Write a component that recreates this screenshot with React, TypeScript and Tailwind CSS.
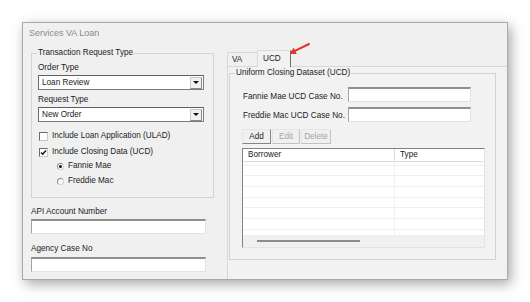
import React from 'react';

const sunken = 'bg-white border-t-[2px] border-t-[#8f8f8f] border-l border-l-[#a3a3a3] border-r border-r-[#e2e2e2] border-b border-b-[#e2e2e2]';

function TextBox({ className = '' }: { className?: string }) {
  return <div className={`h-[15px] ${sunken} ${className}`} />;
}

function Combo({ value }: { value: string }) {
  return (
    <div className="mt-[2px] flex h-[15px] w-[166px] items-center border border-[#7c7c7c] border-t-[#5f5f5f] border-l-[#6a6a6a] bg-white pl-[3px] pr-px">
      <span className="flex-1">{value}</span>
      <div className="flex h-[12px] w-[12px] items-center justify-center border border-[#c9c9c9] border-r-[#8a8a8a] border-b-[#8a8a8a] bg-[#f0f0f0]">
        <svg width="6" height="5" viewBox="0 0 6 5">
          <path d="M0 1h6L3 4z" fill="#111" />
        </svg>
      </div>
    </div>
  );
}

function Check({ label, checked }: { label: string; checked?: boolean }) {
  return (
    <div className="flex h-[10px] items-center gap-[4px] pl-px">
      <div className="flex h-[9px] w-[9px] items-center justify-center border border-[#6c6c6c] border-r-[#c8c8c8] border-b-[#c8c8c8] bg-white">
        {checked && (
          <svg width="7" height="7" viewBox="0 0 7 7">
            <path d="M1 3.5l1.7 1.8L6 1.5" stroke="#111" strokeWidth="1.4" fill="none" />
          </svg>
        )}
      </div>
      <span>{label}</span>
    </div>
  );
}

function Radio({ label, checked }: { label: string; checked?: boolean }) {
  return (
    <div className="flex h-[10px] items-center gap-[4px] pl-[19px]">
      <div className="flex h-[7px] w-[7px] items-center justify-center rounded-full border border-[#8a8a8a] border-r-[#d0d0d0] border-b-[#d0d0d0] bg-white">
        {checked && <div className="h-[3px] w-[3px] rounded-full bg-[#111]" />}
      </div>
      <span>{label}</span>
    </div>
  );
}

function Btn({ label, w, disabled }: { label: string; w: string; disabled?: boolean }) {
  return (
    <div
      className={`flex h-[15px] ${w} items-center justify-center border border-[#e6e6e6] bg-[#f0f0f0] ${
        disabled ? 'border-r-[#c2c2c2] border-b-[#c2c2c2] text-[#a6a6a6]' : 'border-r-[#858585] border-b-[#858585]'
      }`}
    >
      {label}
    </div>
  );
}

const rowHeights = ['h-[10px]', 'h-[11px]', 'h-[11px]', 'h-[10px]', 'h-[11px]', 'h-[11px]', 'h-[6px]'];

export default function App() {
  return (
    <div className="min-h-screen bg-white pl-[22px] pt-[22px]">
      <div className="relative flex h-[258px] w-[486px] flex-col border border-[#a9a9a9] bg-[#f0f0f0] font-['Liberation_Sans',Arial,sans-serif] text-[8.2px] leading-[10px] text-[#1b1b1b] shadow-[3px_4px_12px_rgba(0,0,0,0.35)]">
        {/* title */}
        <div className="flex h-[22px] items-center pb-[2px] pl-[6px] text-[9px] text-[#8b8b8b]">Services VA Loan</div>

        <div className="flex min-h-0 flex-1">
          {/* left column */}
          <div className="w-[191px] pl-[8px]">
            <fieldset className="mt-[3px] w-[183px] border border-[#d3d3d3] px-[6px] pb-[11px]">
              <legend className="-ml-px px-px">Transaction Request Type</legend>
              <div className="mt-[5px]">Order Type</div>
              <Combo value="Loan Review" />
              <div className="mt-[5px]">Request Type</div>
              <Combo value="New Order" />
              <div className="mt-[9px]">
                <Check label="Include Loan Application (ULAD)" />
              </div>
              <div className="mt-[6px]">
                <Check label="Include Closing Data (UCD)" checked />
              </div>
              <div className="mt-[4px]">
                <Radio label="Fannie Mae" checked />
              </div>
              <div className="mt-[5px]">
                <Radio label="Freddie Mac" />
              </div>
            </fieldset>

            <div className="mt-[9px]">API Account Number</div>
            <TextBox className="mt-[2px] w-[175px]" />
            <div className="mt-[10px]">Agency Case No</div>
            <TextBox className="mt-[3px] w-[175px]" />
          </div>

          {/* right column: tabs */}
          <div className="ml-[13px] flex flex-1 flex-col">
            <div className="flex h-[21px] items-end">
              <div className="flex h-[14px] w-[30px] items-center border-t border-l border-[#d7d7d7] pl-[4px]">VA</div>
              <div className="relative z-10 -mb-px flex h-[17px] w-[34px] items-center border-t border-l border-r border-[#dadada] border-r-[#6e6e6e] bg-[#f2f2f2] pb-px pl-[5px]">
                UCD
              </div>
            </div>
            <div className="flex-1 border-t border-l border-[#d7d7d7] bg-[#f2f2f2]">
              <fieldset className="mt-px ml-px h-[192px] w-[267px] border border-[#d3d3d3] pl-[13px]">
                <legend className="-ml-[8px] px-px">Uniform Closing Dataset (UCD)</legend>

                <div className="mt-[9px] flex items-start">
                  <div className="mt-[5px] w-[105px]">Fannie Mae UCD Case No.</div>
                  <TextBox className="w-[123px]" />
                </div>
                <div className="mt-[5px] flex items-start">
                  <div className="mt-[4px] w-[105px]">Freddie Mac UCD Case No.</div>
                  <TextBox className="w-[123px]" />
                </div>

                <div className="mt-[7px] -ml-px flex gap-px">
                  <Btn label="Add" w="w-[29px]" />
                  <Btn label="Edit" w="w-[28px]" disabled />
                  <Btn label="Delete" w="w-[30px]" disabled />
                </div>

                <div className="mt-[4px] -ml-px flex h-[100px] w-[243px] flex-col border border-[#e3e3e3] border-t-[#828282] border-l-[#828282] bg-white">
                  <div className="flex h-[13px] border-b border-[#dcdcdc]">
                    <div className="flex w-[152px] items-center border-r border-[#dcdcdc] pl-[5px]">Borrower</div>
                    <div className="flex flex-1 items-center pl-[5px]">Type</div>
                  </div>
                  <div className="flex h-[3px]">
                    <div className="w-[152px] border-r border-[#f0f0f0]" />
                  </div>
                  {rowHeights.map((h, i) => (
                    <div key={i} className={`flex ${h} border-t border-[#f0f0f0]`}>
                      <div className="w-[152px] border-r border-[#f0f0f0]" />
                    </div>
                  ))}
                  <div className="flex h-[12px] items-center bg-[#f0f0f0]">
                    <div className="ml-[14px] h-[2px] w-[103px] bg-[#8c8c8c]" />
                  </div>
                </div>
              </fieldset>
            </div>
          </div>
        </div>

        {/* red callout arrow */}
        <svg className="absolute left-[262px] top-[17px]" width="30" height="18" viewBox="0 0 30 18">
          <line x1="24" y1="4" x2="9.5" y2="11.2" stroke="#e5322b" strokeWidth="2" strokeLinecap="round" />
          <polygon points="4,14 11.8,14 8.7,7.7" fill="#e5322b" />
        </svg>
      </div>
    </div>
  );
}
